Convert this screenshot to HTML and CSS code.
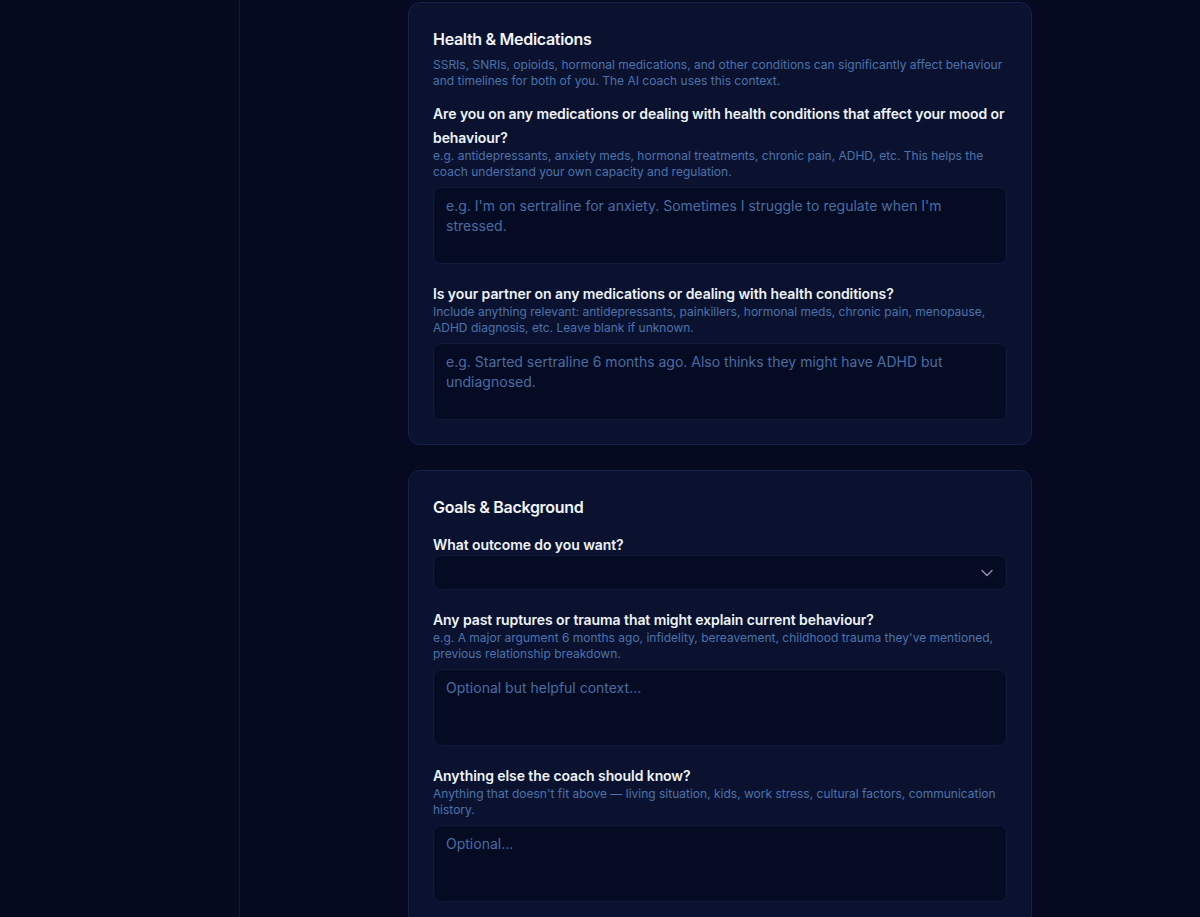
FILE: index.html
```html
<!DOCTYPE html>
<html lang="en">
<head>
<meta charset="utf-8">
<title>Profile context</title>
<link rel="stylesheet" href="styles.css">
</head>
<body>
<div class="app">
  <aside class="sidebar"></aside>
  <main class="content">
    <div class="stack">
      <section class="card">
        <h2 class="card-title">Health &amp; Medications</h2>
        <p class="card-desc">SSRIs, SNRIs, opioids, hormonal medications, and other conditions can significantly affect behaviour and timelines for both of you. The AI coach uses this context.</p>
        <div class="fields">
          <div class="field">
            <label class="label">Are you on any medications or dealing with health conditions that affect your mood or behaviour?</label>
            <p class="hint">e.g. antidepressants, anxiety meds, hormonal treatments, chronic pain, ADHD, etc. This helps the coach understand your own capacity and regulation.</p>
            <textarea class="input textarea" placeholder="e.g. I'm on sertraline for anxiety. Sometimes I struggle to regulate when I'm stressed."></textarea>
          </div>
          <div class="field">
            <label class="label">Is your partner on any medications or dealing with health conditions?</label>
            <p class="hint">Include anything relevant: antidepressants, painkillers, hormonal meds, chronic pain, menopause, ADHD diagnosis, etc. Leave blank if unknown.</p>
            <textarea class="input textarea" placeholder="e.g. Started sertraline 6 months ago. Also thinks they might have ADHD but undiagnosed."></textarea>
          </div>
        </div>
      </section>

      <section class="card">
        <h2 class="card-title card-title-solo">Goals &amp; Background</h2>
        <div class="fields">
          <div class="field">
            <label class="label">What outcome do you want?</label>
            <div class="input select">
              <span class="select-value"></span>
              <svg class="chevron" width="16" height="16" viewBox="0 0 16 16" fill="none" stroke="currentColor" stroke-width="1.5" stroke-linecap="round" stroke-linejoin="round"><path d="M3 5.5L8 10.5L13 5.5"/></svg>
            </div>
          </div>
          <div class="field">
            <label class="label">Any past ruptures or trauma that might explain current behaviour?</label>
            <p class="hint">e.g. A major argument 6 months ago, infidelity, bereavement, childhood trauma they've mentioned, previous relationship breakdown.</p>
            <textarea class="input textarea" placeholder="Optional but helpful context..."></textarea>
          </div>
          <div class="field">
            <label class="label">Anything else the coach should know?</label>
            <p class="hint">Anything that doesn't fit above — living situation, kids, work stress, cultural factors, communication history.</p>
            <textarea class="input textarea" placeholder="Optional..."></textarea>
          </div>
        </div>
      </section>
    </div>
  </main>
</div>
</body>
</html>
```

FILE: styles.css
```css
* { box-sizing: border-box; }

html, body {
  margin: 0;
  height: 100%;
  overflow: hidden;
  background: #050a21;
  font-family: Inter, "Noto Sans", "Liberation Sans", sans-serif;
  color: #e8edf7;
}

.app {
  display: flex;
  height: 100vh;
}

.sidebar {
  width: 240px;
  flex: 0 0 240px;
  background: #050a1f;
  border-right: 1px solid #111a38;
}

.content {
  flex: 1;
  display: flex;
  justify-content: center;
  padding-top: 2px;
  overflow: hidden;
}

.stack {
  width: 624px;
  display: flex;
  flex-direction: column;
  gap: 25px;
}

.card {
  background: #0a1230;
  border: 1px solid #16214a;
  border-radius: 12px;
  padding: 24px;
}

.card-title {
  margin: 0;
  font-size: 16px;
  line-height: 24px;
  font-weight: 600;
  color: #f1f4fa;
  letter-spacing: -0.3px;
}

.card-desc {
  margin: 6px 0 15px;
  font-size: 12px;
  line-height: 16px;
  color: #4d72ab;
}

.card-title-solo {
  margin-bottom: 16px;
}

.fields {
  display: flex;
  flex-direction: column;
  gap: 20px;
}

.field {
  display: flex;
  flex-direction: column;
}

.label {
  display: block;
  font-size: 14px;
  line-height: 24px;
  margin: -2px 0;
  font-weight: 600;
  color: #eef2f9;
  letter-spacing: -0.08px;
}

.hint {
  margin: 0 0 7px;
  font-size: 12px;
  line-height: 16px;
  color: #4d72ab;
}

.input {
  width: 100%;
  background: #060b24;
  border: 1px solid #101a3b;
  border-radius: 8px;
  color: #dbe3f2;
  font-family: inherit;
}

.textarea {
  display: block;
  height: 77px;
  padding: 8px 12px;
  font-size: 14px;
  line-height: 20px;
  resize: none;
  outline: none;
}

.textarea::placeholder {
  color: #4b6ca2;
  opacity: 1;
}

.select {
  margin-top: 0;
  height: 35px;
  flex: 0 0 35px;
  display: flex;
  align-items: center;
  justify-content: space-between;
  padding: 0 11px 0 12px;
}

.chevron {
  color: #8892a8;
}
```
